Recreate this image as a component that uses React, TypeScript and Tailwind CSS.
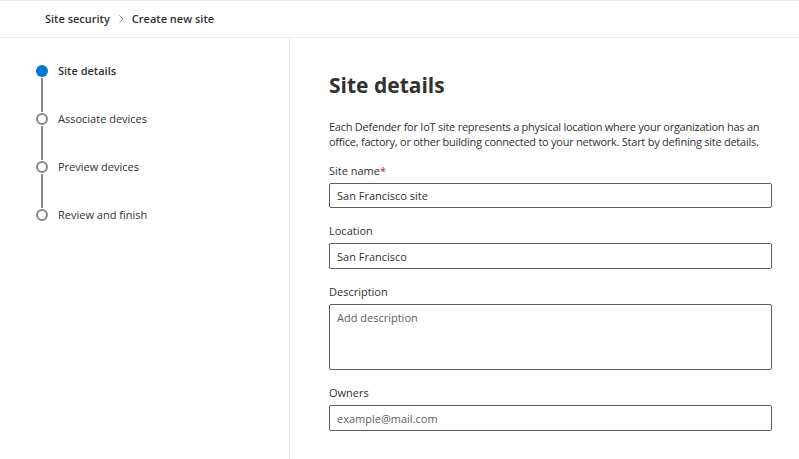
const steps = [
  { label: "Site details", active: true },
  { label: "Associate devices", active: false },
  { label: "Preview devices", active: false },
  { label: "Review and finish", active: false },
];

const font = { fontFamily: '"Segoe UI", "Open Sans", sans-serif' };

function Field({ label, value, required, h }: { label: string; value: string; required?: boolean; h: string }) {
  return (
    <div className="flex flex-col">
      <label className="text-[11px] leading-[16px] text-[#323130] h-[20px]">
        {label}
        {required && <span className="text-[#a4262c]">*</span>}
      </label>
      <input
        readOnly
        value={value}
        className={h + " w-[443px] border border-[#605e5c] rounded-[2px] px-[7px] text-[11px] text-[#323130] outline-none"}
      />
    </div>
  );
}

export default function App() {
  return (
    <div className="w-[799px] h-[459px] bg-white text-[#323130] flex flex-col overflow-hidden" style={font}>
      <header className="h-[38px] border-t border-b border-[#edebe9] flex items-center pl-[45px] text-[11px] font-semibold">
        <span>Site security</span>
        <svg className="mx-[6px]" width="10" height="12" viewBox="0 0 10 12">
          <path d="M3.5 2.5 7 6 3.5 9.5" fill="none" stroke="#8a8886" strokeWidth="1" />
        </svg>
        <span>Create new site</span>
      </header>
      <div className="flex flex-1">
        <aside className="w-[290px] border-r border-[#edebe9] pt-[27px] pl-[36px]">
          {steps.map((s, i) => (
            <div key={s.label} className="flex">
              <div className="flex flex-col items-center w-[12px] shrink-0">
                <div
                  className={
                    s.active
                      ? "w-[12px] h-[12px] shrink-0 rounded-full bg-[#0078d4]"
                      : "w-[12px] h-[12px] shrink-0 rounded-full border-2 border-[#8a8886] bg-white"
                  }
                />
                {i < steps.length - 1 && <div className="w-[2px] h-[34px] my-[1px] bg-[#8a8886]" />}
              </div>
              <span
                className={
                  "ml-[10px] text-[11px] leading-[12px] " + (s.active ? "font-semibold" : "text-[#323130]")
                }
              >
                {s.label}
              </span>
            </div>
          ))}
        </aside>
        <main className="flex-1 pl-[39px] pt-[31px]">
          <h1 className="text-[21px] leading-[32px] font-bold">Site details</h1>
          <p className="mt-[18px] text-[11px] leading-[15px] tracking-[-0.25px] whitespace-nowrap">
            Each Defender for IoT site represents a physical location where your organization has an
            <br />
            office, factory, or other building connected to your network. Start by defining site details.
          </p>
          <div className="mt-[14px] flex flex-col gap-[15px]">
            <Field label="Site name" value="San Francisco site" required h="h-[25px]" />
            <Field label="Location" value="San Francisco" h="h-[26px]" />
            <div className="flex flex-col">
              <label className="text-[11px] leading-[16px] h-[20px]">Description</label>
              <textarea
                readOnly
                placeholder="Add description"
                className="h-[66px] w-[443px] border border-[#605e5c] rounded-[2px] px-[7px] py-[5px] text-[11px] leading-[15px] text-[#323130] placeholder:text-[#605e5c] outline-none resize-none"
              />
            </div>
            <div className="flex flex-col">
              <label className="text-[11px] leading-[16px] h-[20px]">Owners</label>
              <input
                readOnly
                placeholder="example@mail.com"
                className="h-[26px] w-[443px] border border-[#605e5c] rounded-[2px] px-[7px] text-[11px] placeholder:text-[#605e5c] outline-none"
              />
            </div>
          </div>
        </main>
      </div>
    </div>
  );
}
